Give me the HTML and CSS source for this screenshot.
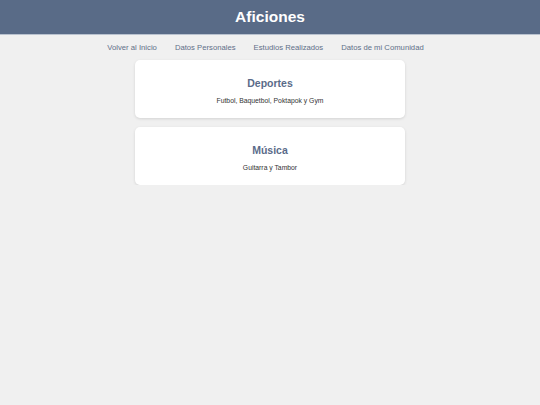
FILE: index.html
```html
<!DOCTYPE html>
<html lang="es">
<head>
    <meta charset="UTF-8">
    <meta name="viewport" content="width=device-width, initial-scale=1.0">
    <title>Aficiones</title>
    <link rel="stylesheet" href="styles.css">
</head>
<body>
    <header>
        <h1>Aficiones</h1>
    </header>

    <nav>
        <a href="#">Volver al Inicio</a>
        <a href="#">Datos Personales</a>
        <a href="#">Estudios Realizados</a>
        <a href="#">Datos de mi Comunidad</a>
    </nav>

    <main class="container">
        <section class="card">
            <h2>Deportes</h2>
            <p>Futbol, Baquetbol, Poktapok y Gym</p>
        </section>

        <section class="card">
            <h2>Música</h2>
            <p>Guitarra y Tambor</p>
        </section>
    </main>
</body>
</html>
```

FILE: styles.css
```css
body {
    margin: 0;
    background-color: #f0f0f0;
    font-family: "Liberation Sans", Arial, sans-serif;
}

header {
    height: 34px;
    display: flex;
    align-items: center;
    justify-content: center;
    background-color: #596b87;
    border-bottom: 1px solid #b9c2cf;
}

header h1 {
    margin: 0;
    color: #fff;
    font-size: 15.5px;
}

nav {
    display: flex;
    justify-content: center;
    gap: 18px;
    padding: 7.5px 9px 8.5px 0;
    line-height: 9px;
}

nav a {
    color: #5f6f88;
    font-size: 7.7px;
    text-decoration: none;
}

.container {
    width: 270px;
    margin: 0 auto;
    display: flex;
    flex-direction: column;
    gap: 9px;
}

.card {
    height: 58px;
    box-sizing: border-box;
    padding-top: 17px;
    text-align: center;
    background-color: #fff;
    border-radius: 5px;
    box-shadow: 0 1px 3px rgba(0, 0, 0, 0.12);
}

.card h2 {
    margin: 0 0 8px;
    color: #5a6b89;
    font-size: 10.5px;
    line-height: 12px;
}

.card p {
    margin: 0;
    color: #333;
    font-size: 6.8px;
    line-height: 8px;
}
```
